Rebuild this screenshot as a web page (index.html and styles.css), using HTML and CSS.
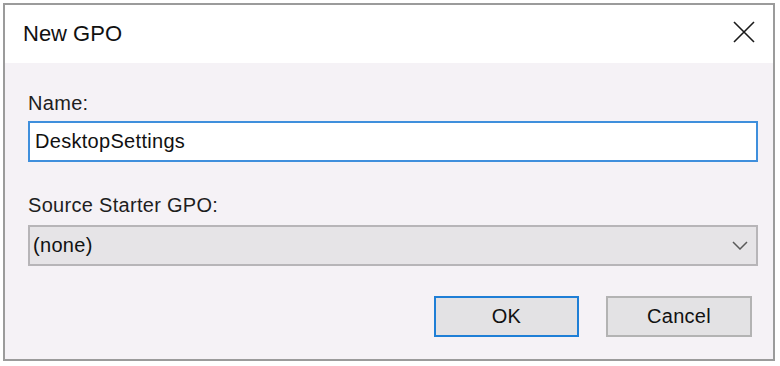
FILE: index.html
```html
<!DOCTYPE html>
<html lang="en">
<head>
<meta charset="utf-8">
<title>New GPO</title>
<link rel="stylesheet" href="styles.css">
</head>
<body>
<div class="dialog">
  <div class="titlebar">
    <span class="title">New GPO</span>
    <svg class="close" width="22" height="22" viewBox="0 0 22 22" aria-hidden="true">
      <path d="M1 1 L21 21 M21 1 L1 21" stroke="#1a1a1a" stroke-width="1.6" fill="none"/>
    </svg>
  </div>
  <div class="content">
    <label class="label">Name:</label>
    <div class="textfield">DesktopSettings</div>
    <label class="label label-source">Source Starter GPO:</label>
    <div class="combo">
      <span class="combo-text">(none)</span>
      <svg class="chevron" width="16" height="9" viewBox="0 0 16 9" aria-hidden="true">
        <path d="M1 1 L8 8 L15 1" stroke="#5a5a5a" stroke-width="1.5" fill="none"/>
      </svg>
    </div>
    <div class="buttons">
      <div class="btn btn-default">OK</div>
      <div class="btn">Cancel</div>
    </div>
  </div>
</div>
</body>
</html>
```

FILE: styles.css
```css
html, body {
  margin: 0;
  padding: 0;
  background: #ffffff;
}

body {
  font-family: "Liberation Sans", Arial, sans-serif;
  color: #1b1b1b;
}

.dialog {
  box-sizing: border-box;
  margin: 3px 0 0 3px;
  width: 772px;
  height: 358px;
  border: 2px solid #9b9b9b;
  display: flex;
  flex-direction: column;
  background: #f5f2f6;
}

.titlebar {
  height: 58px;
  flex: none;
  background: #ffffff;
  display: flex;
  align-items: center;
  justify-content: space-between;
  padding: 0 18px 0 18px;
}

.title {
  font-size: 22px;
  line-height: 26px;
  color: #111111;
}

.close {
  margin-bottom: 4px;
  display: block;
}

.content {
  flex: 1;
  display: flex;
  flex-direction: column;
  padding: 28px 15px 0 23px;
}

.label {
  display: block;
  font-size: 20px;
  line-height: 24px;
  letter-spacing: 0.3px;
  color: #1e1e1e;
}

.label-source {
  margin-top: 31px;
}

.textfield {
  box-sizing: border-box;
  margin-top: 6px;
  height: 41px;
  border: 2px solid #3f8fdc;
  background: #ffffff;
  display: flex;
  align-items: center;
  padding-left: 5px;
  font-size: 20px;
  letter-spacing: 0.3px;
  color: #111111;
}

.combo {
  box-sizing: border-box;
  margin-top: 8px;
  height: 41px;
  border: 2px solid #b7b5b8;
  background: #e6e4e7;
  display: flex;
  align-items: center;
  justify-content: space-between;
  padding: 0 8px 0 3px;
  font-size: 20px;
  letter-spacing: 0.3px;
  color: #111111;
}

.chevron {
  display: block;
}

.buttons {
  margin-top: 30px;
  display: flex;
  justify-content: flex-end;
  gap: 27px;
  padding-right: 6px;
}

.btn {
  box-sizing: border-box;
  width: 146px;
  height: 41px;
  border: 2px solid #b3b3b3;
  background: #e3e2e4;
  display: flex;
  align-items: center;
  justify-content: center;
  font-size: 20px;
  letter-spacing: 0.3px;
  color: #111111;
}

.btn-default {
  width: 145px;
  border-color: #1f7fd6;
}
```
